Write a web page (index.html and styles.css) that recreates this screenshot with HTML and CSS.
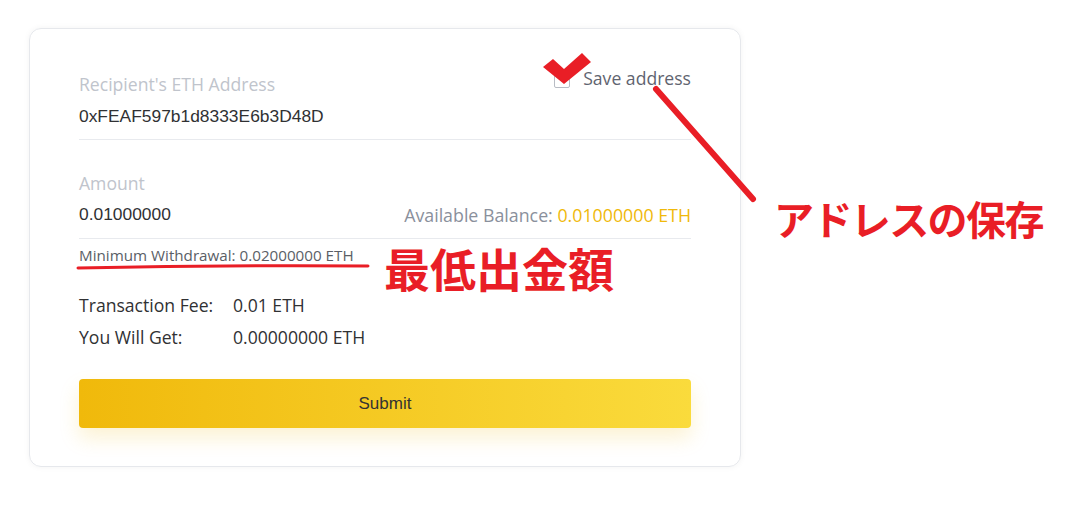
FILE: index.html
```html
<!DOCTYPE html>
<html>
<head>
    <title>Withdraw ETH</title>
    <meta name="viewport" content="width=device-width, initial-scale=1.0">
    <link rel="stylesheet" href="styles.css">
</head>
<body>
    <div class="page">
        <div class="withdraw-card">
            <div class="field field-address">
                <div class="field-head">
                    <span class="field-label">Recipient's ETH Address</span>
                    <label class="save-address">
                        <span class="checkbox"></span>
                        <span>Save address</span>
                    </label>
                </div>
                <div class="field-value mono">0xFEAF597b1d8333E6b3D48D</div>
            </div>

            <div class="field field-amount">
                <div class="field-head">
                    <span class="field-label">Amount</span>
                </div>
                <div class="amount-row">
                    <span class="field-value mono">0.01000000</span>
                    <span class="balance">Available Balance: <em>0.01000000 ETH</em></span>
                </div>
            </div>
            <div class="min-withdraw">Minimum Withdrawal: 0.02000000 ETH</div>

            <div class="summary">
                <div class="summary-row">
                    <span class="summary-key">Transaction Fee:</span>
                    <span>0.01 ETH</span>
                </div>
                <div class="summary-row">
                    <span class="summary-key">You Will Get:</span>
                    <span>0.00000000 ETH</span>
                </div>
            </div>

            <button class="submit-btn">Submit</button>
        </div>

        <!-- annotations drawn over the screenshot -->
        <svg class="marks" width="1076" height="511" viewBox="0 0 1076 511">
            <polygon points="543,67 553,59 564,69 582,53 591,62 564,84" fill="#e91e26"/>
            <path d="M656 89 L753 199" stroke="#e91e26" stroke-width="6" stroke-linecap="round" fill="none"/>
            <path d="M78 268 Q220 265 368 266" stroke="#e91e26" stroke-width="3" stroke-linecap="round" fill="none"/>
        </svg>
        <div class="note note-save">アドレスの保存</div>
        <div class="note note-min">最低出金額</div>
    </div>
</body>
</html>
```

FILE: styles.css
```css
body {
    margin: 0;
    background: #fff;
    font-family: "Open Sans", "Noto Sans", sans-serif;
    color: #303133;
}

.page {
    position: relative;
    width: 1076px;
    height: 511px;
    padding: 28px 0 0 29px;
    box-sizing: border-box;
}

.withdraw-card {
    width: 712px;
    height: 439px;
    box-sizing: border-box;
    border: 1px solid #e6e8ec;
    border-radius: 12px;
    box-shadow: 0 0 6px rgba(0,0,0,0.05);
    padding: 43px 49px 0 49px;
    display: flex;
    flex-direction: column;
}

.field {
    border-bottom: 1px solid #e8eaee;
}

.field-address {
    padding-bottom: 11px;
}

.field-amount {
    margin-top: 31px;
    padding-bottom: 12px;
}

.field-head {
    display: flex;
    justify-content: space-between;
    align-items: flex-start;
    height: 24px;
}

.field-label {
    font-size: 17.6px;
    line-height: 24px;
    color: #c0c4cc;
}

.save-address {
    display: flex;
    align-items: center;
    gap: 13px;
    margin-top: -6px;
    font-size: 17.6px;
    line-height: 24px;
    color: #5f6470;
}

.checkbox {
    width: 14px;
    height: 14px;
    border: 1px solid #b8bcc4;
    border-radius: 2px;
    margin-top: 3px;
}

.field-value {
    margin-top: 8px;
    font-size: 17.4px;
    line-height: 24px;
}

.mono {
    font-family: "Liberation Sans", Arial, sans-serif;
}

.amount-row {
    display: flex;
    justify-content: space-between;
    align-items: baseline;
    margin-top: 6px;
}

.amount-row .field-value {
    margin-top: 0;
}

.balance {
    font-size: 17.8px;
    color: #8a909c;
    position: relative;
    top: 2px;
}

.balance em {
    font-style: normal;
    color: #f0b90b;
}

.min-withdraw {
    margin-top: 7px;
    font-size: 15.2px;
    line-height: 18px;
    color: #5a5e66;
}

.summary {
    margin-top: 29px;
    display: flex;
    flex-direction: column;
    gap: 8px;
}

.summary-row {
    display: flex;
    font-size: 17.6px;
    line-height: 24px;
    color: #303133;
}

.summary-key {
    width: 154px;
}

.submit-btn {
    margin-top: 30px;
    height: 49px;
    border: none;
    border-radius: 4px;
    background: linear-gradient(to right, #f0b90b, #fadb3c);
    box-shadow: 0 10px 20px rgba(240,185,11,0.18);
    font-family: "Liberation Sans", Arial, sans-serif;
    font-size: 17px;
    color: #333;
    cursor: pointer;
}

.marks {
    position: absolute;
    top: 0;
    left: 0;
    pointer-events: none;
}

.note {
    position: absolute;
    font-family: "Noto Sans CJK JP", sans-serif;
    font-weight: 700;
    color: #e91e26;
    white-space: nowrap;
}

.note-save {
    left: 774px;
    top: 188px;
    font-size: 40px;
    line-height: 60px;
    letter-spacing: -1.6px;
}

.note-min {
    left: 384px;
    top: 237px;
    font-size: 46px;
    line-height: 60px;
}
```
